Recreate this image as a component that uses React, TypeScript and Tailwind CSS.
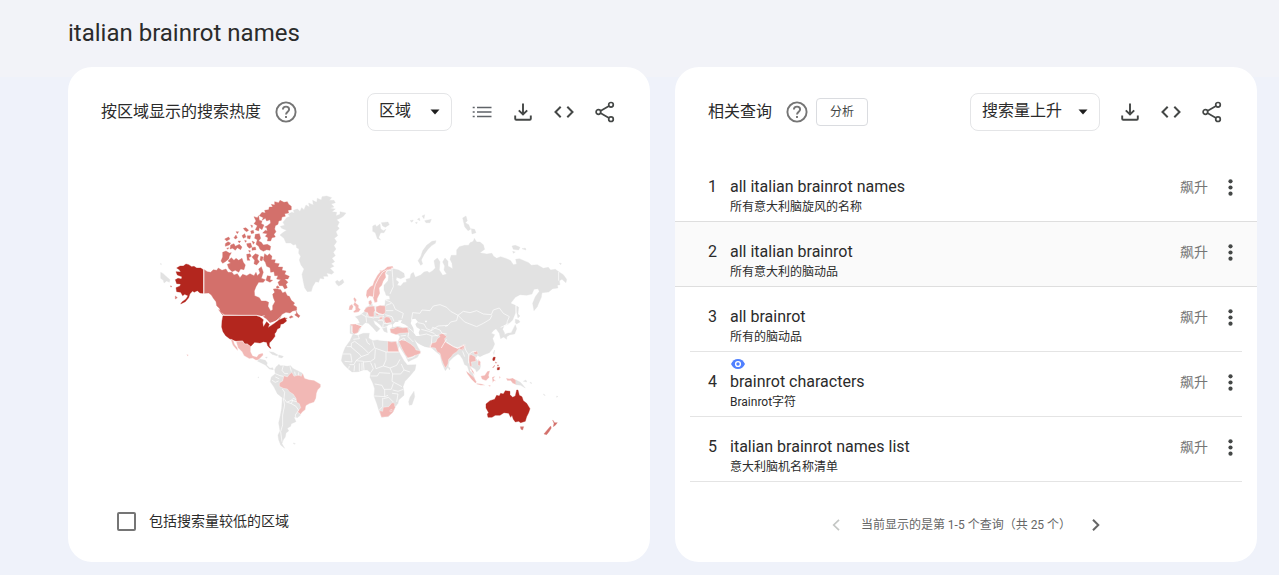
import React, { useState } from 'react';

type Tone = 'none' | 'low' | 'mid' | 'high';

interface Shape {
  tone: Tone;
  d: string;
}

interface Query {
  text: string;
  translation: string;
  watched?: boolean;
}

const queries: Query[] = [
  { text: 'all italian brainrot names', translation: '所有意大利脑旋风的名称' },
  { text: 'all italian brainrot', translation: '所有意大利的脑动品' },
  { text: 'all brainrot', translation: '所有的脑动品' },
  { text: 'brainrot characters', translation: 'Brainrot字符', watched: true },
  { text: 'italian brainrot names list', translation: '意大利脑机名称清单' },
];

const tones: Record<Tone, { fill: string; stroke: string }> = {
  none: { fill: '#e2e2e2', stroke: '#e2e2e2' },
  low: { fill: '#f2b8b5', stroke: '#fff' },
  mid: { fill: '#d3706b', stroke: '#d3706b' },
  high: { fill: '#b3261e', stroke: '#b3261e' },
};

const americas: Shape[] = [
  // Greenland and Iceland
  { tone: 'none', d: 'M390 150L400 142 410 136 395 130 391 124 404 121 399 112 410 98 420 94 414 88 425 82 433 84 430 76 442 72 450 79 455 68 462 74 468 60 478 66 476 54 490 60 488 46 500 52 502 40 514 45 516 35 530 33 545 38 538 46 552 46 556 53 544 57 552 66 540 70 556 72 546 80 560 82 558 92 570 88 570 80 588 84 580 94 570 100 560 104 568 112 562 124 568 130 558 140 563 152 553 160 560 170 552 182 558 192 550 202 556 212 546 220 554 230 544 236 552 244 540 250 552 262 545 268 530 264 534 274 520 274 522 282 510 280 506 292 497 290 488 305 484 319 472 320 464 308 460 290 456 268 462 252 453 240 448 225 452 214 446 205 447 192 440 188 438 178 430 180 422 174 408 174 402 160Z' },
  { tone: 'none', d: 'M556 290L562 286 568 290 578 283 582 292 576 298 566 303 560 298Z' },
  // Alaska
  { tone: 'high', d: 'M160 254L152 249 140 249 132 244 125 245 116 239 108 237 100 243 90 243 80 249 88 254 92 261 78 260 82 270 96 275 94 282 84 280 76 284 80 296 92 297 90 303 78 308 80 320 92 322 98 332 104 328 114 332 108 342 96 351 92 357 106 350 116 338 120 326 128 318 132 322 142 317 150 324 160 325Z' },
  { tone: 'mid', d: 'M76 333L82 338 76 342ZM62 302L66 305 62 306Z' },
  { tone: 'none', d: 'M30 236L34 236 34 239ZM32 262L40 266 48 274 60 284 58 292 50 288 42 294 40 286 32 280Z' },
  // Canada
  { tone: 'mid', d: 'M163 254L172 260 182 262 190 254 200 256 205 249 216 256 228 252 234 262 246 262 252 270 262 266 270 278 278 268 290 272 300 266 312 272 318 262 322 272 330 264 326 252 334 245 340 262 334 280 346 284 340 292 326 292 318 305 313 318 314 332 328 338 334 348 348 348 356 352 354 364 362 378 368 374 368 362 375 350 370 338 368 328 374 322 370 312 380 311 392 314 398 324 406 320 412 332 418 334 424 346 434 354 430 360 440 366 440 376 428 378 420 384 408 382 396 388 390 400 375 408 360 414 350 402 338 394 322 391 224 389 212 380 208 370 200 362 198 350 190 340 184 330 176 324 163 325Z' },
  { tone: 'mid', d: 'M218 202L228 198 238 204 244 203 238 214 236 222 226 230 218 235 213 228 218 216Z' },
  { tone: 'mid', d: 'M244 218L252 226 258 220 266 226 276 220 280 232 286 240 282 254 272 252 266 262 256 256 246 260 236 250 232 238 242 234 234 228Z' },
  { tone: 'mid', d: 'M328 92L336 82 346 84 344 76 356 74 358 66 368 66 364 58 374 60 374 50 386 53 390 46 402 52 412 50 416 58 424 64 424 74 414 76 416 84 404 86 406 94 396 96 394 106 386 108 384 118 376 122 374 132 378 140 372 148 376 156 366 158 362 168 352 168 354 158 346 154 352 146 338 144 346 136 352 138 350 128 344 126 352 122 362 114 360 104 350 108 346 100 336 106 340 98Z' },
  { tone: 'mid', d: 'M312 95L322 98 326 92 328 106 336 108 334 116 342 120 336 134 328 128 326 138 316 134 322 122 312 116 318 108Z' },
  { tone: 'mid', d: 'M316 148L328 146 332 160 326 168 334 172 340 180 352 178 362 184 360 196 350 194 340 199 330 193 326 184 318 178 322 164 314 160Z' },
  { tone: 'mid', d: 'M344 206L352 212 358 206 366 214 364 224 376 224 374 234 388 236 384 246 398 246 396 256 408 258 404 268 418 274 414 282 404 282 414 292 408 298 412 308 404 312 398 302 388 302 384 292 392 284 380 282 384 272 374 272 372 260 362 262 360 248 350 244 346 232 340 224Z' },
  { tone: 'mid', d: 'M306 216L316 206 326 210 322 222 328 230 320 240 312 236 314 226ZM290 208L300 206 304 214 296 218 300 226 292 226ZM332 214L340 216 336 228 330 226ZM352 272L362 274 360 284 368 286 360 292 348 286ZM378 306L384 302 388 308 382 310Z' },
  { tone: 'mid', d: 'M226 176L234 170 242 174 238 180 226 184ZM242 180L252 176 256 184 268 178 276 186 272 194 262 188 256 196 248 190 240 192ZM224 162L236 156 240 162 230 168ZM252 158L258 150 262 158 256 162ZM258 140L266 140 262 146ZM280 130L288 128 296 136 290 140 284 136ZM276 152L284 146 288 156 280 160ZM292 152L302 152 300 162 292 160ZM290 176L302 174 306 186 298 190 292 184ZM306 168L314 172 310 178ZM306 188L316 186 318 194 306 196ZM302 138L310 136 312 144 304 146ZM296 196L302 198 298 202ZM230 190L236 188 234 193ZM264 168L272 168 268 174ZM302 120L308 122 306 128ZM284 166L290 168 286 172Z' },
  { tone: 'mid', d: 'M398 402L404 398 412 400 406 404ZM434 390L440 384 438 378 444 388 450 392 446 398 440 394ZM418 396L424 392 430 396 420 400ZM206 374L214 382 222 392 216 388Z' },
  // United States
  { tone: 'high', d: 'M219 392L318 392 330 396 340 404 338 412 340 426 350 410 358 418 354 428 372 416 388 404 404 398 410 408 400 416 392 418 390 428 382 432 378 442 374 446 375 454 366 466 358 474 358 482 363 490 360 490 353 482 350 472 340 470 330 474 314 472 304 482 300 486 292 476 284 476 278 467 258 468 240 462 227 452 219 440 215 426 216 408Z' },
  // Mexico, Hawaii
  { tone: 'low', d: 'M258 469L278 468 284 477 292 477 302 484 302 500 308 512 320 516 326 508 338 504 340 510 332 518 326 524 318 526 308 520 298 521 282 512 276 500 264 488ZM242 462L250 466 254 478 262 488 264 498 256 490 248 480ZM110 508L116 510 112 514Z' },
  // Central America, Caribbean
  { tone: 'none', d: 'M322 528L330 522 346 526 352 534 350 540 360 550 368 548 370 554 358 552 346 540 334 534ZM358 500L370 502 384 510 380 512 366 508ZM386 510L400 514 396 519 386 517ZM346 517L352 516 350 520Z' },
  // South America
  { tone: 'none', d: 'M374 554L378 546 387 538 391 542 402 542 412 544 422 542 428 550 440 556 456 564 462 578 452 600 462 650 448 684 452 690 442 698 432 696 438 710 424 716 422 724 412 730 416 738 408 744 406 756 400 764 396 776 404 790 392 780 386 764 384 750 390 738 386 714 391 692 395 670 397 638 382 626 372 606 361 590 364 576 376 566ZM430 774L436 776 432 778ZM324 576L327 577 325 579Z' },
  { tone: 'low', d: 'M388 594L398 588 402 572 412 576 418 568 426 562 432 574 446 570 454 574 458 564 464 580 478 584 492 586 502 592 512 598 512 606 504 614 500 624 498 640 492 652 478 656 468 662 466 674 458 680 452 688 442 680 452 668 448 656 440 652 438 640 430 628 418 620 412 612 400 610 388 604Z' },
];

const americasBorders =
  'M161 253V327M218 391H320L338 396 350 406 360 415 376 410 396 392M330 396L344 392M376 576L388 582M376 566L390 572 400 574M366 586L376 592 386 588M400 542L396 556 404 566 414 566M420 544L424 560M434 560L436 570M446 562L446 572M397 612L404 622 402 640 410 652 424 646 440 650M412 652L424 656 438 664 446 676 436 690 438 700M400 640L404 660 398 690 398 720 392 740 396 770M424 646L430 640 438 644M424 656L428 646';

const oldWorld: Shape[] = [
  // Eurasia mainland
  { tone: 'none', d: 'M190 236L206 240 222 250 224 261 212 266 200 262 198 270 206 276 202 286 212 288 220 278 230 276 228 268 240 265 243 252 250 247 256 262 272 255 282 246 292 244 298 248 308 242 316 234 312 212 322 204 330 215 328 240 338 256 350 252 342 240 344 228 338 216 345 204 354 214 354 228 368 236 366 220 360 208 364 196 380 196 380 180 388 170 404 166 416 166 420 158 430 154 433 145 440 156 450 156 460 164 464 178 450 188 470 192 486 190 490 198 500 205 512 200 530 206 542 212 550 224 560 222 557 208 568 206 582 212 596 218 604 226 622 224 640 235 655 232 662 240 676 238 686 245 700 254 710 268 708 278 696 268 688 272 690 284 682 286 684 294 668 296 656 306 636 308 634 322 626 340 622 350 612 362 608 340 616 320 628 304 624 296 612 298 606 312 590 316 570 314 556 322 542 340 556 346 556 370 548 390 535 402 522 408 518 418 524 430 522 440 512 446 508 430 498 416 490 422 484 430 494 434 488 446 494 462 488 476 478 488 462 494 450 500 442 496 438 506 446 514 452 526 450 536 440 546 436 538 424 530 420 542 428 550 434 566 430 570 420 554 416 540 412 528 404 524 398 508 390 496 384 492 370 502 358 514 354 532 346 542 336 520 330 495 318 485 305 474 285 470 272 464 262 458 252 446 264 472 272 485 262 502 245 510 235 515 228 500 215 480 206 465 204 455 210 440 205 434 184 428 180 418 188 410 186 402 176 404 170 410 172 428 162 424 156 412 150 404 140 396 130 390 134 402 150 416 140 426 126 410 115 400 106 398 95 408 86 426 72 434 60 430 60 405 80 402 90 400 84 388 76 380 90 376 102 366 108 352 118 348 118 335 124 332 128 348 150 350 165 345 166 330 180 328 178 318 168 316 166 308 162 300 162 286 174 272 176 256 168 250 176 240Z' },
  { tone: 'none', d: 'M128 108L136 104 140 110 150 102 152 116 160 122 168 118 162 128 152 128 146 142 152 150 142 146 136 128 128 124ZM154 98L174 96 178 104 166 112 158 108ZM240 92L250 90 246 97ZM262 88L268 84 270 92ZM276 78L284 74 282 86ZM284 92L304 88 300 98 288 98ZM256 98L262 96 260 101ZM398 84L408 78 412 92 406 98 416 104 422 118 414 122 404 110ZM424 116L434 118 438 128 426 132ZM546 168L556 166 570 172 566 180 550 178ZM576 176L586 174 588 180ZM548 184L556 186 550 190ZM688 220L694 220 692 224Z' },
  { tone: 'none', d: 'M318 152L306 154 290 166 278 182 272 200 264 212 272 226 278 222 274 210 282 194 294 178 306 166 316 160Z' },
  { tone: 'none', d: 'M560 348L566 352 564 372 570 378 564 384 560 366ZM556 388L566 390 570 396 560 402 556 398ZM556 404L560 416 554 432 540 434 530 440 530 448 522 442 516 438 532 430 544 428 550 416ZM354 530L360 534 358 540ZM494 480L490 488 492 494Z' },
  // Africa
  { tone: 'none', d: 'M68 434L84 436 100 430 118 430 116 444 128 452 142 450 150 452 172 454 200 455 206 470 204 480 212 495 222 512 232 525 258 524 255 540 240 558 225 574 219 590 222 606 222 616 206 630 204 640 196 650 190 665 175 680 155 682 148 665 140 640 132 618 134 596 128 578 120 562 122 548 112 540 100 540 85 545 66 546 54 536 42 524 34 512 38 492 46 472 60 452ZM240 622L252 604 254 620 246 644 238 646 236 635Z' },
  { tone: 'low', d: 'M173 453L184 456 198 454 203 470 207 486 173 486Z' },
  { tone: 'low', d: 'M206 454L214 450 226 452 242 462 254 472 258 480 270 482 272 490 252 498 234 504 226 494 216 476Z' },
  { tone: 'low', d: 'M148 662L158 664 160 652 176 650 186 638 194 640 194 648 196 652 188 668 174 680 154 682ZM180 660L186 658 186 664 180 666Z' },
  // Europe
  { tone: 'low', d: 'M108 316L110 302 120 290 128 286 132 274 142 256 152 244 164 238 172 230 188 228 190 234 170 242 166 250 168 262 160 274 156 286 148 294 150 310 142 326 142 336 134 338 128 320 118 318 112 326Z' },
  { tone: 'low', d: 'M148 242L156 240 152 246ZM116 334L122 330 126 338 122 346 116 342ZM70 326L74 322 80 330 76 338 86 346 86 354 92 358 86 366 72 368 70 364 76 360 76 350 70 344 74 336ZM58 348L66 342 70 350 66 360 56 360ZM102 362L108 354 114 350 132 348 136 362 132 366 132 380 118 380 112 368 104 366ZM138 350L150 346 166 348 166 368 158 374 146 370 138 364ZM136 368L148 374 140 378ZM148 380L160 378 156 388 148 388ZM162 386L168 380 178 382 186 396 170 400 164 396ZM60 403L78 402 96 408 88 416 84 428 72 432 66 426 66 410ZM180 416L190 416 202 410 218 414 232 412 236 428 210 430 198 434 182 428Z' },
  // South Asia
  { tone: 'low', d: 'M298 472L304 460 318 456 322 446 330 440 326 434 338 430 350 440 344 446 346 456 356 462 372 470 382 476 394 468 402 464 406 470 398 480 388 476 380 486 370 492 364 500 356 508 354 522 348 532 346 534 340 522 334 506 330 490 322 486 316 474Z' },
  { tone: 'low', d: 'M386 474L398 466 406 464 400 472 394 480ZM418 496L424 494 436 500 438 514 424 516 426 528 420 530 416 510ZM430 484L442 484 444 492 434 494ZM444 508L452 516 450 528 444 526Z' },
  // Indonesia and the Philippines
  { tone: 'low', d: 'M408 542L420 552 432 562 440 576 436 580 424 568 412 552ZM420 530L430 544 434 554 426 546ZM440 580L456 582 466 586 452 586 440 583ZM452 558L464 556 472 544 480 542 476 556 478 562 468 572 456 568ZM486 562L496 558 490 566 498 574 492 572 488 578ZM508 558L512 562 508 566ZM528 564L538 566 548 564 558 570 558 584 548 580 542 572 532 572ZM474 586L482 586 480 590Z' },
  { tone: 'none', d: 'M558 570L570 576 576 582 586 594 572 586 558 584ZM580 574L588 570 590 576ZM600 576L606 580 602 580ZM640 612L646 616 642 616ZM680 618L684 620 680 622Z' },
  { tone: 'high', d: 'M491 501L496 502 494 511 489 512 488 507ZM502 533L509 532 508 539 502 540Z' },
  { tone: 'mid', d: 'M496 516L500 518 498 520ZM494 526L492 530 488 534ZM504 524L506 528 502 528Z' },
  // Australia, Tasmania, New Zealand
  { tone: 'high', d: 'M468 642L480 632 494 628 500 616 508 618 512 610 520 612 526 602 540 604 540 614 548 622 556 618 560 600 564 600 568 616 576 620 580 632 590 640 600 656 596 668 590 680 586 694 572 698 566 694 556 696 550 688 546 676 542 682 536 670 522 668 510 676 496 676 486 682 474 682 472 672 476 668 468 654Z' },
  { tone: 'mid', d: 'M571 710L581 710 578 720 573 718ZM668 690L674 698 682 698 676 706 670 710 672 700ZM662 708L664 714 658 724 650 734 642 732 650 722Z' },
];

// Seas and lakes that lie inside the mainland outline
const waters =
  'M246 388L256 386 264 396 256 402 260 412 270 418 266 428 270 438 258 438 252 428 250 414 242 400ZM188 404L196 396 206 396 204 392 216 390 212 398 226 404 236 412 218 412 204 408 190 412ZM284 392L292 392 288 398Z';

const oldWorldBorders =
  'M186 232L188 262 190 290 180 312M130 322L132 300 136 284 146 264 158 246 170 240 184 242M686 246V272M166 330L182 336 190 344 196 358 220 370 216 386M168 346L184 340M168 362L190 362M166 374L186 380 192 394M136 348V366L148 372 162 374M132 382L146 382 162 380M144 392L158 390 162 400 184 402M160 400L158 414 176 408M94 372L108 380 110 398M112 368L110 380 132 384M78 402L96 408M66 406V430M244 392L248 368 270 370 276 360 300 362 310 348 330 344 350 352 362 364 384 376 400 364 420 368 440 362 460 372 484 374 490 360 508 354 520 370 538 380 532 394 530 404 512 412M384 376L380 392 362 396 354 406 346 410M384 376L404 396 440 410 460 400 480 388 486 376M264 398L282 402 290 416 304 422 324 408 354 406M274 418L296 424 312 430 322 440M304 422L308 412 330 420 336 430 350 432M236 414L248 424 260 436M236 428L234 440 250 456M270 436L290 432 306 438 304 462 300 474M306 438L326 436M212 438L228 436M208 452L222 444 226 452M334 474L342 460 350 448M350 456L370 470 384 474M384 474L402 466 408 482 416 494 426 486 438 484M398 484L404 500M416 494L416 520M438 500L446 514M232 506L248 502 256 496M536 400L522 408'
  + 'M70 448L88 446 84 434M50 470H64V460L74 454 100 474 116 490 134 474 128 454M108 446L112 458 120 464M36 492H62L66 516 44 514M62 470L90 494 94 500 78 512 72 524 58 524M94 500L116 492M78 512L100 514 102 540M100 516L122 514 134 506 136 478M134 474L168 486V510L160 528 138 536M168 486H206M122 518L130 536 122 548M138 536L134 520M160 528L180 534 200 526 210 508M180 534L188 552 212 552 222 540 214 522M222 540L240 546M188 552L186 574 216 590M122 558H142L148 548 180 550M134 582L156 586 162 598H184L190 580M132 618L164 620 174 616M164 598V620M188 600L204 604 220 598M186 610L204 612 200 636M158 624V650L148 660M160 626L176 622 190 636M88 520V544M96 518V540M74 526L72 544M58 528L56 536';

const mapLayers = [
  { name: 'americas', transform: 'translate(150 185) scale(.3333)', shapes: americas, borders: americasBorders },
  { name: 'old-world', transform: 'translate(330 190) scale(.3333)', shapes: oldWorld, borders: oldWorldBorders },
];

const WorldMap: React.FC = () => (
  <svg viewBox="68 157 582 330" className="block w-full" role="img" aria-label="按区域显示的搜索热度">
    {mapLayers.map((layer) => (
      <g key={layer.name} transform={layer.transform} strokeLinejoin="round">
        {layer.shapes.map((shape) => (
          <path key={shape.d} d={shape.d} {...tones[shape.tone]} strokeWidth="1" />
        ))}
        {layer.name === 'old-world' && <path d={waters} fill="#fff" />}
        <path d={layer.borders} fill="none" stroke="#fff" strokeOpacity=".85" strokeWidth="2.4" />
      </g>
    ))}
  </svg>
);

const HelpIcon = () => (
  <svg width="22" height="22" viewBox="0 0 22 22" fill="none" stroke="#757575" strokeWidth="1.9">
    <circle cx="11" cy="11" r="9.6" />
    <path d="M7.9 8.6c0-1.9 1.4-3 3.1-3s3.1 1.1 3.1 2.8c0 2.2-3.1 2.6-3.1 5.2" />
    <path d="M11 15v2.1" />
  </svg>
);

const ListIcon = () => (
  <svg width="20" height="14" viewBox="0 0 20 14" fill="none" stroke="#5f6368" strokeWidth="1.5">
    <path d="M5 2.5h14.5M5 7h14.5M5 11.5h14.5M.7 2.5h2M.7 7h2M.7 11.5h2" />
  </svg>
);

const DownloadIcon = () => (
  <svg width="18" height="18" viewBox="0 0 18 18" fill="none" stroke="#444746" strokeWidth="1.9">
    <path d="M9 .5v11M4.800 7.300L9 11.500l4.200-4.200M1.200 12.500v3.200q0 1 1 1h13.600q1 0 1-1v-3.200" />
  </svg>
);

const CodeIcon = () => (
  <svg width="20" height="12" viewBox="0 0 20 12" fill="none" stroke="#444746" strokeWidth="2">
    <path d="M6.700 .8L1.500 6l5.200 5.200M13.300 .8L18.500 6l-5.200 5.200" />
  </svg>
);

const ShareIcon = () => (
  <svg width="20" height="22" viewBox="0 0 20 22" fill="none" stroke="#444746" strokeWidth="1.7">
    <circle cx="16" cy="3.8" r="2.3" />
    <circle cx="3.4" cy="11" r="2.3" />
    <circle cx="16" cy="18.2" r="2.3" />
    <path d="M5.400 9.900L14 5M5.400 12.100L14 17" />
  </svg>
);

const EyeIcon = () => (
  <svg width="14" height="10" viewBox="0 0 14 10" aria-hidden="true">
    <path d="M0 5C1.300 1.900 3.900 0 7 0s5.700 1.900 7 5c-1.300 3.100-3.900 5-7 5S1.300 8.100 0 5z" fill="#5080ff" />
    <circle cx="7" cy="5" r="2.4" fill="none" stroke="#fff" strokeWidth="1.4" />
  </svg>
);

const IconButton: React.FC<{ label: string; children: React.ReactNode }> = ({ label, children }) => (
  <button type="button" aria-label={label} className="flex h-10 w-[41px] items-center justify-center">
    {children}
  </button>
);

const Dropdown: React.FC<{ label: string; options: string[] }> = ({ label, options }) => (
  <div className="relative mr-[9px]">
    <select
      aria-label={label}
      className="block h-[38px] min-w-[85px] appearance-none rounded-lg border border-[#e4e5e7] bg-white pr-9 pb-[2px] pl-[11px] text-base text-[#2b2b2b]"
    >
      {options.map((option) => (
        <option key={option}>{option}</option>
      ))}
    </select>
    <svg width="10" height="6" viewBox="0 0 10 6" className="pointer-events-none absolute top-4 right-3" aria-hidden="true">
      <path d="M.5 .5h9L5 5.500z" fill="#1f1f1f" />
    </svg>
  </div>
);

const ShareActions = () => (
  <>
    <IconButton label="下载"><DownloadIcon /></IconButton>
    <IconButton label="嵌入"><CodeIcon /></IconButton>
    <IconButton label="分享"><ShareIcon /></IconButton>
  </>
);

const RegionCard: React.FC = () => {
  const [includeLow, setIncludeLow] = useState(false);

  return (
    <section className="rounded-3xl bg-white">
      <div className="flex h-[89px] items-center pr-[25px] pl-[33px]">
        <h2 className="text-base">按区域显示的搜索热度</h2>
        <button type="button" aria-label="帮助" className="ml-[14px]"><HelpIcon /></button>
        <div className="ml-auto flex items-center">
          <Dropdown label="区域类型" options={['区域']} />
          <IconButton label="列表"><ListIcon /></IconButton>
          <ShareActions />
        </div>
      </div>
      <div className="pt-px">
        <WorldMap />
      </div>
      <label className="flex h-[68px] items-center gap-[13px] px-[49px] text-sm">
        <input
          type="checkbox"
          checked={includeLow}
          onChange={(e) => setIncludeLow(e.target.checked)}
          className="size-[19px] appearance-none rounded-xs border-2 border-[#757575] checked:bg-[#757575]"
        />
        包括搜索量较低的区域
      </label>
    </section>
  );
};

const QueriesCard: React.FC = () => (
  <section className="rounded-3xl bg-white">
    <div className="flex h-[89px] items-center pr-[25px] pl-[33px]">
      <h2 className="text-base">相关查询</h2>
      <button type="button" aria-label="帮助" className="ml-[14px]"><HelpIcon /></button>
      <button type="button" className="ml-2 h-7 rounded-sm border border-[#dadce0] px-[13px] text-xs text-[#444746]">
        分析
      </button>
      <div className="ml-auto flex items-center">
        <Dropdown label="排序" options={['搜索量上升']} />
        <ShareActions />
      </div>
    </div>
    <ol className="pt-px">
      {queries.map((query, i) => (
        <li key={query.text} className={i === 1 ? 'bg-[#fafafa]' : ''}>
          <div
            className={
              i < 2
                ? 'relative flex h-[65px] border-b border-[#dedede] pt-5 pr-5 pl-[33px]'
                : 'relative mx-[15px] flex h-[65px] border-b border-[#e4e4e4] pt-5 pr-[5px] pl-[18px]'
            }
          >
            {query.watched && (
              <span className="absolute top-[7px] left-[41px]"><EyeIcon /></span>
            )}
            <span className="w-[22px] text-base leading-5">{i + 1}</span>
            <div>
              <a href="#" className="block text-base leading-5">{query.text}</a>
              <p className="text-xs leading-5">{query.translation}</p>
            </div>
            <span className="ml-auto text-sm leading-5 text-[#757575]">飙升</span>
            <button type="button" aria-label="更多" className="ml-[15px] flex h-5 w-[14px] items-center justify-center">
              <svg width="5" height="17" viewBox="0 0 5 17" fill="#444746">
                <circle cx="2.5" cy="2.3" r="2.1" />
                <circle cx="2.5" cy="8.5" r="2.1" />
                <circle cx="2.5" cy="14.7" r="2.1" />
              </svg>
            </button>
          </div>
        </li>
      ))}
    </ol>
    <nav className="flex h-20 items-center justify-center gap-[21px] pt-[6px] text-xs text-[#666]">
      <button type="button" aria-label="上一页" disabled className="text-[#c4c7c5]">
        <svg width="8" height="12" viewBox="0 0 8 12" fill="none" stroke="currentColor" strokeWidth="1.7">
          <path d="M7 .8L1.700 6 7 11.200" />
        </svg>
      </button>
      <span>当前显示的是第 1-5 个查询（共 25 个）</span>
      <button type="button" aria-label="下一页">
        <svg width="8" height="12" viewBox="0 0 8 12" fill="none" stroke="currentColor" strokeWidth="2">
          <path d="M1 .8L6.300 6 1 11.200" />
        </svg>
      </button>
    </nav>
  </section>
);

export default function App() {
  return (
    <div className="bg-white pr-px pb-px font-['Roboto','Noto_Sans_CJK_SC',sans-serif] text-[#2b2b2b]">
      <div className="bg-[#eff2fa] pb-[13px]">
        <header className="h-[77px] bg-[#f2f3f8] pt-[17px] pl-[68px]">
          <h1 className="text-2xl leading-8">italian brainrot names</h1>
        </header>
        <main className="-mt-[10px] grid grid-cols-2 gap-[25px] pr-[22px] pl-[68px]">
          <RegionCard />
          <QueriesCard />
        </main>
      </div>
    </div>
  );
}
